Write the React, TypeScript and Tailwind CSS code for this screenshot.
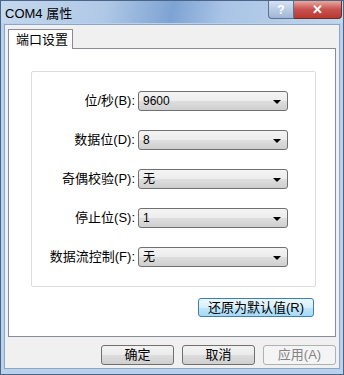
import React from 'react';

const font = { fontFamily: '"Liberation Sans", "Noto Sans CJK SC", sans-serif' };

function Combo({ value }: { value: string }) {
  return (
    <div className="relative ml-[3px] flex h-[20px] w-[150px] items-center rounded-[3px] border border-[#707070] bg-[linear-gradient(#f4f4f4_0%,#ececec_50%,#dedede_51%,#cfcfcf_100%)] pl-[4px] text-[12px] text-black">
      {value}
      <span className="absolute right-[6px] top-[8px] h-0 w-0 border-x-[4px] border-t-[4px] border-x-transparent border-t-black" />
    </div>
  );
}

function Button({ label, kind = 'normal', className = '' }: { label: string; kind?: 'normal' | 'hot' | 'disabled'; className?: string }) {
  const styles = {
    normal: 'border-[#707070] bg-[linear-gradient(#f2f2f2_0%,#ebebeb_50%,#dddddd_51%,#cfcfcf_100%)] text-black',
    hot: 'border-[#3c7fb1] bg-[linear-gradient(#eaf6fd_0%,#d9f0fc_50%,#bee6fd_51%,#a7d9f5_100%)] text-black',
    disabled: 'border-[#adb2b5] bg-[#f4f4f4] text-[#838383]',
  };
  return (
    <div className={`flex items-center justify-center rounded-[3px] border text-[13px] ${styles[kind]} ${className}`}>
      {label}
    </div>
  );
}

export default function App() {
  const rows = [
    { label: '位/秒(B):', value: '9600' },
    { label: '数据位(D):', value: '8' },
    { label: '奇偶校验(P):', value: '无' },
    { label: '停止位(S):', value: '1' },
    { label: '数据流控制(F):', value: '无' },
  ];

  return (
    <div style={font} className="flex h-[375px] w-[344px] flex-col overflow-hidden border border-[#4a6588] bg-[#b9d1ea]">
      {/* Title bar */}
      <div className="flex h-[22px] items-start justify-between bg-[linear-gradient(100deg,#c4d8ee_0%,#b0c9e6_30%,#7ea3d3_50%,#a9c4e6_65%,#c2d6ec_100%)]">
        <div className="pl-[4px] pt-[3px] text-[13px] text-black">COM4 属性</div>
        <div className="mr-[1px] flex">
          <div className="flex h-[18px] w-[26px] items-center justify-center rounded-bl-[4px] border border-t-0 border-[#5b7396] bg-[linear-gradient(#d4e2f2,#9fb6d6)] text-[12px] font-bold text-white">
            ?
          </div>
          <div className="flex h-[18px] w-[48px] items-center justify-center rounded-br-[4px] border border-l-0 border-t-0 border-[#6b2a2a] bg-[linear-gradient(#e9a99a,#c75050_50%,#b83a30)] text-[13px] font-bold text-white">
            ✕
          </div>
        </div>
      </div>

      {/* Dialog body */}
      <div className="mx-[3px] mb-[5px] mt-[1px] flex flex-1 flex-col border border-[#8ea6c6] bg-[#f0f0f0] px-[3px] pt-[4px]">
        {/* Tab strip */}
        <div className="flex">
          <div className="relative z-10 -mb-px flex h-[20px] w-[65px] items-center border border-b-0 border-[#898c95] bg-white pl-[7px] text-[13px] text-black">
            端口设置
          </div>
        </div>

        {/* Tab page */}
        <div className="flex h-[289px] flex-col border border-[#898c95] bg-white pl-[22px] pr-[19px] pt-[22px]">
          <div className="flex h-[216px] flex-col gap-[19px] rounded-[2px] border border-[#dcdcdc] pt-[19px]">
            {rows.map((r) => (
              <div key={r.label} className="flex items-center">
                <div className="w-[103px] text-right text-[13px] text-black">{r.label}</div>
                <Combo value={r.value} />
              </div>
            ))}
          </div>
          <div className="mt-[11px] flex justify-end pr-[2px]">
            <Button label="还原为默认值(R)" kind="hot" className="h-[19px] w-[116px]" />
          </div>
        </div>

        {/* Dialog buttons */}
        <div className="mt-[8px] flex justify-end gap-[8px]">
          <Button label="确定" className="h-[20px] w-[73px]" />
          <Button label="取消" className="h-[20px] w-[73px]" />
          <Button label="应用(A)" kind="disabled" className="h-[20px] w-[73px]" />
        </div>
      </div>
    </div>
  );
}
